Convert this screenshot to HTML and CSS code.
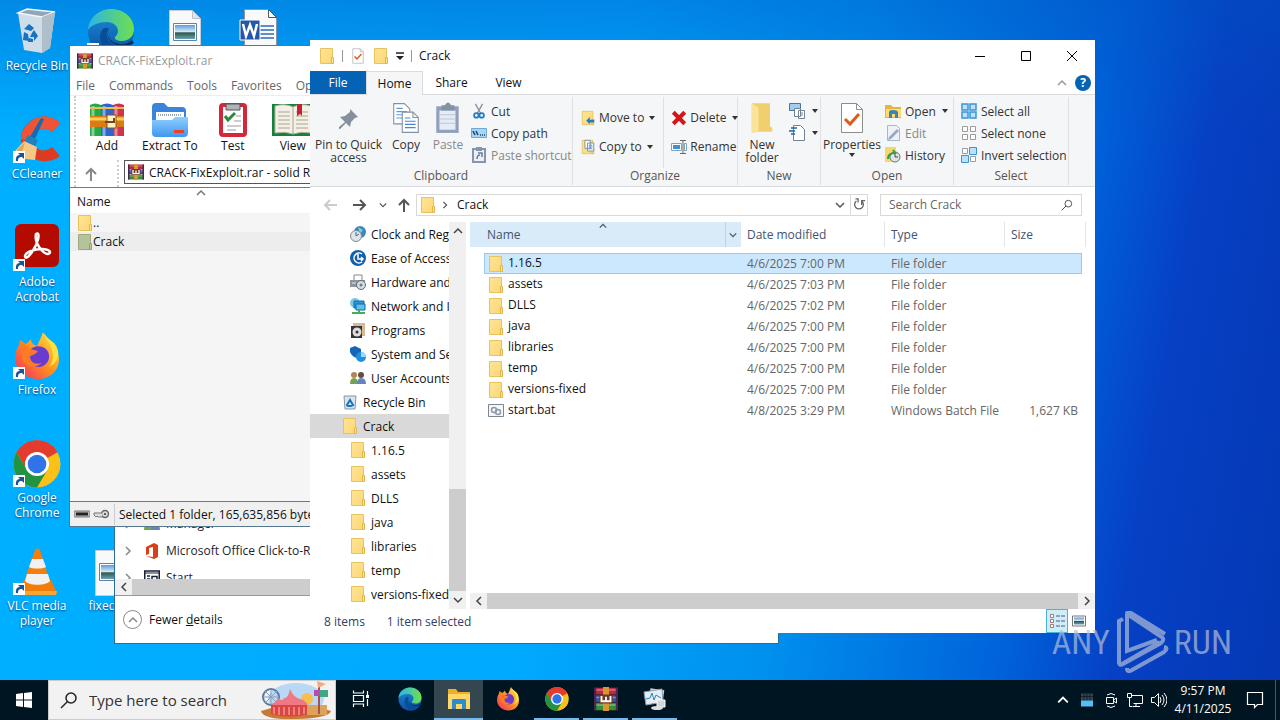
FILE: index.html
```html
<!DOCTYPE html>
<html lang="en">
<head>
    <meta charset="UTF-8">
    <meta name="viewport" content="width=device-width, initial-scale=1.0">
    <title>Crack</title>
    <link rel="stylesheet" href="styles.css">
</head>
<body>
    <!-- Icon sprite -->
    <svg class="sprite" aria-hidden="true">
        <defs>
            <linearGradient id="gFolder" x1="0" y1="0" x2="1" y2="1"><stop offset="0" stop-color="#ffe596"/><stop offset="1" stop-color="#fbd676"/></linearGradient>
            <linearGradient id="gEdge" x1="0" y1="0" x2="1" y2="0"><stop offset="0" stop-color="#2bb4e8"/><stop offset="1" stop-color="#6ee04c"/></linearGradient>
            <linearGradient id="gEdge2" x1="0" y1="0" x2="0" y2="1"><stop offset="0" stop-color="#1b8fd8"/><stop offset="1" stop-color="#0d4fa4"/></linearGradient>
            <linearGradient id="gFox" x1="1" y1="0" x2="0" y2="1"><stop offset="0" stop-color="#fff04a"/><stop offset=".5" stop-color="#ff9020"/><stop offset="1" stop-color="#f2266b"/></linearGradient>
            <linearGradient id="gZip" x1="0" y1="0" x2="0" y2="1"><stop offset="0" stop-color="#8fd0ff"/><stop offset="1" stop-color="#3f97ee"/></linearGradient>
            <linearGradient id="gSky" x1="0" y1="0" x2="0" y2="1"><stop offset="0" stop-color="#5a9bdc"/><stop offset=".5" stop-color="#dcebf4"/><stop offset=".55" stop-color="#2d5a4c"/><stop offset="1" stop-color="#6fa0b4"/></linearGradient>
        </defs>
        <symbol id="folder" viewBox="0 0 16 18"><path d="M1.500 1.500h12v15h-12z" fill="url(#gFolder)" stroke="#e8c35c"/><path d="M12.500 10.500h2v6h-2z" fill="#ffe596" stroke="#e0b64c"/></symbol>
        <symbol id="folder-green" viewBox="0 0 16 18"><path d="M1.500 1.500h12v15h-12z" fill="#b5c39a" stroke="#9caa7c"/><path d="M12.500 10.500h2v6h-2z" fill="#bccaa0" stroke="#93a276"/></symbol>
        <symbol id="shortcut" viewBox="0 0 48 48"><path d="M0 35h12v12H0z" fill="#fff"/><path d="M3 45c-.5-4 1-6 4-6l-2-2h6v6l-2-2c-3 0-4 1-4 4z" fill="#1d5496"/></symbol>
        <symbol id="recycle" viewBox="0 0 48 48"><path d="M5 5l9-4 28 3-5 36-8 5-18-3z" fill="#cfdde8"/><path d="M5 5l9-4 28 3-13 5z" fill="#93a6b5" stroke="#f2f7fa" stroke-width="1.500"/><path d="M29 9l13-5-5 36-8 5z" fill="#afbfca"/><path d="M11 21l5-5 5 4-3 3zM21 22l4 6-4 5v-4h-4l2-4zM11 24l4 2 1 7-6-1zM16 30l4 1v3h-5z" fill="#1572c4"/></symbol>
        <symbol id="edge" viewBox="0 0 48 48"><circle cx="24" cy="24" r="23" fill="url(#gEdge2)"/><path d="M1 22C2 8 14 1 24 1c13 0 23 9 23 20 0 8-6 12-12 12-5 0-8-2-7-4 2-2 3-4 3-6 0-5-5-9-11-9C12 14 4 17 1 22z" fill="url(#gEdge)"/><path d="M17 20c-7 6-5 20 9 27 9 0 16-5 19-12-9 6-23 3-25-6-1-4 0-7 2-9z" fill="#0a4c98"/><path d="M22 20c-4 7 1 16 13 16 5 0 8-2 10-4l2 3c-8 6-23 3-26-6-1-4-1-7 1-9z" fill="#07315f"/></symbol>
        <symbol id="picture-file" viewBox="0 0 48 48"><path d="M8.500 2.500h23l8 8v37h-31z" fill="#f8f9fa" stroke="#c8ced4"/><path d="M31.500 2.500v8h8z" fill="#dfe5ea" stroke="#b9c2ca"/><path d="M12.500 15.500h23v17h-23z" fill="#fff" stroke="#5c84a6"/><path d="M14 17h20v14H14z" fill="url(#gSky)"/></symbol>
        <symbol id="word-file" viewBox="0 0 48 48"><path d="M9.500 1.500h24l8 8v37h-32z" fill="#f8f9fa" stroke="#8b949c"/><path d="M33.500 1.500v8h8z" fill="#fff" stroke="#555"/><path d="M25 18h14M25 22h14M25 26h14M25 30h14" stroke="#2b6cb8" stroke-width="1.500"/><path d="M5 12h20v20H5z" fill="#2457a8" stroke="#fff"/><path d="M8 16l3 12 4-11 4 11 3-12" fill="none" stroke="#fff" stroke-width="2.500"/></symbol>
        <symbol id="ccleaner" viewBox="0 0 48 48"><path d="M47 7l-8 9c-8-8-20-1-18 10 2 9 11 11 18 5l8 9C34 51 9 44 8 24 8 3 33-7 47 7z" fill="#dd3a22"/><path d="M47 7l-8 9c-8-8-20-1-18 10L8 23C10 3 33-7 47 7z" fill="#ee5438"/><path d="M31 3l-9 20-5-2L28 2z" fill="#176aae"/><path d="M15 19l10 5-3 7-11-5z" fill="#2380bf"/><path d="M11 25l13 6-2 13-10-1-10-8z" fill="#f3c889"/><path d="M4 34l8-8-4 14z" fill="#dca65c"/></symbol>
        <symbol id="acrobat" viewBox="0 0 48 48"><rect x="2" y="0" width="44" height="43" rx="6" fill="#b30b00"/><path d="M23 10c5-3 2 10-4 18-4 6-7 7-7 4 1-4 9-7 17-7 8 0 10 4 6 5-5 0-14-11-12-20z" fill="none" stroke="#fff" stroke-width="2.500"/></symbol>
        <symbol id="firefox" viewBox="0 0 48 48"><path d="M30 0c2 5 5 6 8 9l1 3c4 4 7 9 7 15 0 12-9 20-21 20S2 38 2 26c0-6 2-10 4-13l1-5c3 2 4 3 6 4l5-5c0 4 3 6 6 7C26 9 28 6 30 0z" fill="url(#gFox)"/><path d="M15 21c3-7 12-9 18-4 6 6 3 17-7 18-8 0-12-7-11-14z" fill="#6a3bd0"/><path d="M7 11c4 1 8 4 10 6l8 2c-2 3-5 4-8 5 0 7 6 9 12 7-8 7-19 3-20-6z" fill="#ff7a24"/><path d="M31 1c1 7 9 11 9 22 0 6-2 10-5 12 10-3 14-15 6-24-4-3-8-6-10-10z" fill="#ffe13d"/></symbol>
        <symbol id="chrome" viewBox="0 0 48 48"><circle cx="24" cy="24" r="23.500" fill="#fbc116"/><path d="M24 24L3.600 12.300A23.500 23.500 0 0 1 44.400 12.300z" fill="#e33b2e"/><path d="M24 12h20.400A23.500 23.500 0 0 0 3.600 12.300L14 30z" fill="#e33b2e"/><path d="M3.600 12.300A23.500 23.500 0 0 0 24 47.500L34.400 30 14 30z" fill="#229342"/><circle cx="24" cy="24" r="12" fill="#fff"/><circle cx="24" cy="24" r="9.300" fill="#2f74e8"/></symbol>
        <symbol id="vlc" viewBox="0 0 48 48"><path d="M11 32h27l6 13H5z" fill="#f07c0a"/><path d="M5 43h39l-1 4H4z" fill="#ffa632"/><path d="M22 2c1-2 4-2 5 0l10 32c-3 6-23 6-26 0z" fill="#f57e0c"/><path d="M19 11h11l3 8c-3 2-14 2-17 0zM14 26h21l2 7c-4 5-21 5-25 0z" fill="#f0f1f0"/></symbol>
        <symbol id="rar" viewBox="0 0 32 32"><path d="M0 1h32v9H0z" fill="#bd2840"/><path d="M0 11h32v9H0z" fill="#3752af"/><path d="M0 21h32v10H0z" fill="#398e36"/><path d="M0 4h32M0 14h32M0 24h32" stroke="#ffffff55" stroke-width="2"/><path d="M0 1h3v30H0zM29 1h3v30h-3z" fill="#48264f"/><path d="M12 0h8v32h-8z" fill="#d59634"/><path d="M7 10h18v12H7z" fill="#713b20"/><path d="M10 12v7h12v-7M16 13v6" fill="none" stroke="#fff" stroke-width="2.500"/></symbol>
        <symbol id="books" viewBox="0 0 34 34"><path d="M0 2q5-3 11 0v31H0z" fill="#28a745"/><path d="M11 2q6-3 12 0v31H11z" fill="#2c65cb"/><path d="M23 2q6-3 11 0v31H23z" fill="#ce344e"/><path d="M3 3v30M14 3v30M26 3v30" stroke="#ffffff70" stroke-width="3"/><path d="M0 13h34v11H0z" fill="#d97b17"/><path d="M0 16h34" stroke="#ffcd55" stroke-width="3"/><rect x="17" y="12" width="9" height="13" fill="#fff1c3" stroke="#875325"/><path d="M15 19h9v-4" fill="none" stroke="#774516" stroke-width="2"/><path d="M0 5h34" stroke="#eac151" stroke-width="2"/></symbol>
        <symbol id="extract" viewBox="0 0 36 34"><path d="M0 4q0-4 4-4h8l4 4h14q4 0 4 4v22H0z" fill="#3b84de"/><path d="M4 9h28v12H4z" fill="#fff"/><path d="M6 12h24" stroke="#9aa9ba" stroke-width="2" stroke-dasharray="1 1"/><path d="M0 17h20l3-3h13v16q0 4-4 4H4q-4 0-4-4z" fill="url(#gZip)"/><path d="M22 27h10v3H22z" fill="#e9412b"/></symbol>
        <symbol id="test" viewBox="0 0 28 34"><rect width="28" height="34" rx="4" fill="#d5273c"/><path d="M4 4h20v26H4z" fill="#fff"/><path d="M7 1h14v6H7z" fill="#adb5bb" stroke="#555"/><path d="M6 13l3 4 7-7" fill="none" stroke="#2c8a3d" stroke-width="3"/><path d="M15 18h7M8 23h14M17 13h5M8 27h9" stroke="#999"/></symbol>
        <symbol id="book" viewBox="0 0 42 34"><path d="M0 1h42v32H0z" fill="#14823d"/><path d="M3 3q10-3 18 1 8-4 18-1v27q-10-2-18 1-8-3-18-1z" fill="#f4f0e5" stroke="#b8b0a0"/><path d="M21 4v27M6 9h12M6 13h12M6 17h12M6 21h12M6 25h12M24 9h12M24 13h12M24 17h12M24 21h12M24 25h12" stroke="#a7a393"/><path d="M25 1h5v12l-2-2-3 2z" fill="#c32134"/></symbol>
        <symbol id="up" viewBox="0 0 16 16"><path d="M8 15V3M3 8l5-5 5 5" fill="none" stroke="currentColor" stroke-width="2"/></symbol>
        <symbol id="back" viewBox="0 0 16 16"><path d="M15 8H3M8 3L3 8l5 5" fill="none" stroke="currentColor" stroke-width="2"/></symbol>
        <symbol id="forward" viewBox="0 0 16 16"><path d="M1 8h12M8 3l5 5-5 5" fill="none" stroke="currentColor" stroke-width="2"/></symbol>
        <symbol id="chev-up" viewBox="0 0 10 10"><path d="M1 7l4-4 4 4" fill="none" stroke="currentColor" stroke-width="1.500"/></symbol>
        <symbol id="chev-down" viewBox="0 0 10 10"><path d="M1 3l4 4 4-4" fill="none" stroke="currentColor" stroke-width="1.500"/></symbol>
        <symbol id="chev-left" viewBox="0 0 10 10"><path d="M7 1L3 5l4 4" fill="none" stroke="currentColor" stroke-width="1.500"/></symbol>
        <symbol id="chev-right" viewBox="0 0 10 10"><path d="M3 1l4 4-4 4" fill="none" stroke="currentColor" stroke-width="1.500"/></symbol>
        <symbol id="caret" viewBox="0 0 6 4"><path d="M0 0h6L3 4z" fill="currentColor"/></symbol>
        <symbol id="qat-menu" viewBox="0 0 8 8"><path d="M0 1h8" stroke="#222" stroke-width="1.500"/><path d="M0 4h8L4 8z" fill="#222"/></symbol>
        <symbol id="checkdoc" viewBox="0 0 24 32"><path d="M1.500 1.500h15l6 6v23h-21z" fill="#fff" stroke="#8d8d8d"/><path d="M16.500 1.500v6h6" fill="none" stroke="#8d8d8d"/><path d="M5 17l5 5 9-10" fill="none" stroke="#e3591b" stroke-width="3"/></symbol>
        <symbol id="pin" viewBox="0 0 24 24"><path d="M13 3l8 8-3 1-4 4-1 5-4-4-6 6-1 0v-2l6-5-5-5 5-1 5-4z" fill="#85909c"/></symbol>
        <symbol id="copy" viewBox="0 0 26 30"><path d="M1.500 1.500h10l5 5v14h-15z" fill="#fff" stroke="#8290a0"/><path d="M4 6h6M4 9h10M4 12h10M4 15h10" stroke="#5e9bdf"/><path d="M9.500 9.500h10l5 5v14h-15z" fill="#fff" stroke="#8290a0"/><path d="M19.500 9.500v5h5" fill="none" stroke="#8290a0"/><path d="M12 15h5M12 18h10M12 21h10M12 24h10" stroke="#3e87dc"/></symbol>
        <symbol id="paste" viewBox="0 0 24 30"><path d="M1 4h21v25H1z" fill="#8fa1bb"/><path d="M4 8h15v18H4z" fill="#e6ecf5"/><path d="M4 12h15M4 16h15M4 20h15" stroke="#bac6d8"/><path d="M6 3h3q3-5 6 0h3v5H6z" fill="#8393a6"/></symbol>
        <symbol id="cut" viewBox="0 0 16 18"><path d="M4 1l6 11M12 1L6 12" stroke="#8794a4" stroke-width="1.500"/><circle cx="5" cy="14" r="2.500" fill="none" stroke="#257ac0" stroke-width="2"/><circle cx="11" cy="14" r="2.500" fill="none" stroke="#257ac0" stroke-width="2"/></symbol>
        <symbol id="path" viewBox="0 0 16 10"><path d="M.5.5h15v9H.5z" fill="#a9d4f4" stroke="#70a9d5"/><path d="M2 3l2 4M5 3l2 4M9 7h1M11 7h1M13 7h1" stroke="#144471" stroke-width="1.500"/></symbol>
        <symbol id="paste-shortcut" viewBox="0 0 14 16"><path d="M1 2h12v13H1z" fill="#ecf0f6" stroke="#8794ad" stroke-width="2"/><path d="M4 0h6v4H4z" fill="#8794ad"/><path d="M5 12q0-4 3-4M6 6h4v4" fill="none" stroke="#687998" stroke-width="1.500"/></symbol>
        <symbol id="moveto" viewBox="0 0 16 18"><use href="#folder"/><path d="M6 12l4-4v3h5v3h-5v2z" fill="#287bc3"/></symbol>
        <symbol id="copyto" viewBox="0 0 16 18"><use href="#folder"/><path d="M4.500 1.500h6v9h-6zM7.500 4.500h7v9h-7z" fill="#fff" stroke="#728aa3"/><path d="M9 7h4M9 9h4M9 11h4" stroke="#468bd1"/></symbol>
        <symbol id="delete" viewBox="0 0 14 14"><path d="M2 2l10 10M12 2L2 12" stroke="#d4151a" stroke-width="3.500"/></symbol>
        <symbol id="rename" viewBox="0 0 16 16"><path d="M.5 4.500h10v7H.5zM13.500 4.500h2v7h-2z" fill="#fff" stroke="#7fa3c2"/><path d="M2 6h7v4H2z" fill="#4490d5"/><path d="M9 1.500h6M9 14.500h6M12 1.500v13" stroke="#666"/></symbol>
        <symbol id="newfolder" viewBox="0 0 20 28"><path d="M1 1h16v20l2 2v3H6l-5 1z" fill="#f2cf6d"/><path d="M1 1l6 4v20l-6 2z" fill="#fbe39a"/></symbol>
        <symbol id="newitem" viewBox="0 0 18 18"><path d="M1.500 1.500h11v7h-11z" fill="#a4cdec" stroke="#417897"/><path d="M6.500 6.500h6v8h-6zM10.500 8.500h6v8h-6z" fill="#fff" stroke="#718295"/><path d="M12 11h3M12 13h3" stroke="#718295"/></symbol>
        <symbol id="easy" viewBox="0 0 18 18"><path d="M5.500 1.500h7l4 4v11h-11z" fill="#fff" stroke="#6f8499"/><path d="M3 4h6M1 7h6M3 10h4" stroke="#2461ad" stroke-width="1.500"/></symbol>
        <symbol id="open" viewBox="0 0 16 16"><path d="M0 2h6l2 2h8v11H0z" fill="#e7b637"/><path d="M1 6h15v8H1z" fill="#ffdb70"/><path d="M4 15V9q0-2 4-2t5 2v6h-3v-4H7v4z" fill="#3984be"/></symbol>
        <symbol id="edit" viewBox="0 0 16 16"><path d="M2.500.5h9l3 3v12h-12z" fill="#eef2f8" stroke="#aab5c6"/><path d="M4 12l8-8 2 2-8 8-3 1z" fill="#96a9c4"/></symbol>
        <symbol id="history" viewBox="0 0 16 16"><path d="M0 0h11v15H0z" fill="#f8d66e"/><circle cx="10" cy="10" r="5" fill="#dfe4e4" stroke="#6b7573"/><path d="M10 7v3h3" fill="none" stroke="#444"/><path d="M3 12q0-6 7-6L8 3" fill="none" stroke="#30a042" stroke-width="2"/></symbol>
        <symbol id="selall" viewBox="0 0 16 16"><path d="M1 1h6v6H1zM9 1h6v6H9zM1 9h6v6H1zM9 9h6v6H9z" fill="#bfe0fa" stroke="#3a95d7" stroke-width="1.500"/></symbol>
        <symbol id="selnone" viewBox="0 0 16 16"><path d="M1.500 1.500h5v5h-5zM9.500 1.500h5v5h-5zM1.500 9.500h5v5h-5zM9.500 9.500h5v5h-5z" fill="#fff" stroke="#9b9b9b"/></symbol>
        <symbol id="selinv" viewBox="0 0 16 16"><path d="M1.500 1.500h5v5h-5zM9.500 9.500h5v5h-5z" fill="#fff" stroke="#9b9b9b"/><path d="M8.500.5h7v7h-7zM.5 8.500h7v7h-7z" fill="#bfe0fa" stroke="#3a95d7"/></symbol>
        <symbol id="refresh" viewBox="0 0 16 16"><path d="M5 3.500A5 5 0 1 0 11 3.500M11 8V3h4M4 1h3v4" fill="none" stroke="#666" stroke-width="1.500"/></symbol>
        <symbol id="loupe" viewBox="0 0 18 18"><circle cx="11" cy="7" r="5" fill="none" stroke="currentColor" stroke-width="1.500"/><path d="M7.500 10.500L1 17" stroke="currentColor" stroke-width="1.500"/></symbol>
        <symbol id="clock" viewBox="0 0 16 16"><circle cx="10" cy="6" r="6" fill="#3888bd"/><path d="M8 1l5 3-3 4z" fill="#8ac6e3"/><circle cx="6" cy="10" r="5.500" fill="#dce5e9" stroke="#7d8b95"/><path d="M6 6v4l3-2" fill="none" stroke="#556879"/></symbol>
        <symbol id="ease" viewBox="0 0 16 16"><circle cx="8" cy="8" r="8" fill="#1260ac"/><path d="M12 4a5 5 0 1 0 0 8M8 4v5h5M11 7l2 2-2 2" fill="none" stroke="#fff" stroke-width="1.500"/></symbol>
        <symbol id="hardware" viewBox="0 0 16 16"><path d="M4 1h8v6H4z" fill="#fff" stroke="#888"/><path d="M0 6h15v7H0z" fill="#8b969e"/><circle cx="11" cy="11" r="4.500" fill="#d5dde1" stroke="#5f6a72"/><circle cx="11" cy="11" r="1.500" fill="#667d8b"/><path d="M2 9h4" stroke="#dfe7ea"/></symbol>
        <symbol id="network" viewBox="0 0 16 16"><circle cx="5" cy="5" r="5" fill="#7fc6e6"/><path d="M4 3h10v7H4z" fill="#2a99dc" stroke="#136aa3"/><path d="M6 6h9v6H6z" fill="#5dc1f0" stroke="#136aa3"/><path d="M2 15h13M9 12v3" stroke="#4caa58" stroke-width="2"/></symbol>
        <symbol id="programs" viewBox="0 0 16 16"><path d="M3 1h12v13H3z" fill="#d7ba94"/><path d="M1 4h11v12H1z" fill="#343434"/><circle cx="7" cy="10" r="4.500" fill="#ddd"/><circle cx="7" cy="10" r="1.500" fill="#343434"/></symbol>
        <symbol id="system" viewBox="0 0 16 16"><path d="M0 2l5-2 6 3v4q0 4-4 5-5-1-7-6z" fill="#1566b8"/><circle cx="11" cy="11" r="5" fill="#1e90de"/><path d="M11 11V6a5 5 0 0 1 5 5z" fill="#98dbff"/></symbol>
        <symbol id="users" viewBox="0 0 16 16"><circle cx="4" cy="5" r="3" fill="#b48453"/><circle cx="11" cy="5" r="3" fill="#654c3c"/><path d="M0 14q0-6 4-6t4 6z" fill="#72a354"/><path d="M7 14q0-6 4-6 5 0 5 6z" fill="#6484bb"/></symbol>
        <symbol id="bin" viewBox="0 0 16 16"><path d="M2 2h12l-1 13H3z" fill="#d8e5ec" stroke="#8397a5"/><path d="M5 11l3-5 3 5-2 1H6z" fill="none" stroke="#1776c2" stroke-width="2"/></symbol>
        <symbol id="bat" viewBox="0 0 16 14"><path d="M.5.500h15v12H.5z" fill="#f5f7f9" stroke="#7b8790"/><circle cx="6" cy="6" r="2.500" fill="none" stroke="#8c9aa7" stroke-width="1.500"/><circle cx="10" cy="8" r="2.500" fill="none" stroke="#8c9aa7" stroke-width="1.500"/></symbol>
        <symbol id="drive" viewBox="0 0 16 8"><rect y="1" width="16" height="6" rx="1" fill="#bbb" stroke="#777"/><path d="M2 4h12" stroke="#222" stroke-width="3"/></symbol>
        <symbol id="key" viewBox="0 0 16 10"><circle cx="12" cy="5" r="3.500" fill="#ddd" stroke="#666" stroke-width="1.500"/><path d="M9 4H1v2l2 2 1-1 1 1h4" fill="#ddd" stroke="#777"/><circle cx="12" cy="5" r="1" fill="#333"/></symbol>
        <symbol id="office" viewBox="0 0 14 16"><path d="M1 4l8-4 4 2v12l-4 2-8-3 7 1V4L4 5v6l-3 1z" fill="#dc3e15"/></symbol>
        <symbol id="startapp" viewBox="0 0 16 16"><path d="M.75 1h14.500v14H.75z" fill="#fff" stroke="#142038" stroke-width="1.500"/><path d="M1 3h14" stroke="#142038"/><path d="M3 6h3M3 9h3M8 6.500h5v4H8z" fill="none" stroke="#142038" stroke-width="1.500"/></symbol>
        <symbol id="details" viewBox="0 0 16 14"><path d="M1.500.5h3v3h-3zM1.500 5.500h3v3h-3zM1.500 10.500h3v3h-3z" fill="#fff" stroke="#a77"/><path d="M7 2h4M12 2h4M7 7h4M12 7h4M7 12h4M12 12h4" stroke="#557"/></symbol>
        <symbol id="thumbs" viewBox="0 0 14 11"><path d="M.5.5h13v10H.5z" fill="#fff" stroke="#777"/><path d="M2 2h10v7H2z" fill="url(#gSky)"/></symbol>
        <symbol id="windows" viewBox="0 0 16 16"><path d="M0 2l7-1v6.500H0zM8 1l8-1v7.500H8zM0 8.500h7V15l-7-1zM8 8.500h8V16l-8-1z" fill="#fff"/></symbol>
        <symbol id="carnival" viewBox="0 0 70 38"><ellipse cx="35" cy="18" rx="28" ry="16" fill="#b9d8f5"/><circle cx="10" cy="16" r="8" fill="none" stroke="#577ba0" stroke-width="2"/><path d="M10 8v16M2 16h16M4 10l12 12M16 10L4 22" stroke="#8b9db5"/><path d="M0 30q35-12 70 0-2 7-35 8T0 30z" fill="#c77a36"/><circle cx="46" cy="18" r="6" fill="#f8bd4b"/><path d="M9 24q5-1 8-7 5 4 6 0 4 1 6-9 3 8 10 10 5 1 8 6z" fill="#ee7884"/><path d="M10 24h38v9q-19 5-38 0z" fill="#dc4345"/><path d="M13 26v7M18 26v8M23 26v8M28 26v8M33 26v8M38 26v8M43 26v7" stroke="#ffc4a8"/><path d="M46 24h20v10H46z" fill="#dca35b"/><path d="M58 2v31" stroke="#a85345" stroke-width="2"/><path d="M56 0l9 3-8 4z" fill="#f2aa80"/><path d="M53 9h6v6h-6z" fill="#b84caf"/><path d="M59 9h8v7h-8z" fill="#40a683"/></symbol>
        <symbol id="taskview" viewBox="0 0 18 18"><path d="M1.500 2V.5M11.500.5V3h-10V.5M1.500 5.500h10v6h-10zM1.500 17v-3h10v3M15.500 1v4M15.500 9v7" fill="none" stroke="#fff" stroke-width="1.200"/><path d="M14 5h3v3h-3z" fill="#fff"/></symbol>
        <symbol id="explorer" viewBox="0 0 24 22"><path d="M1 1h8l2 3h12v16H1z" fill="#f0ad26"/><path d="M1 6h22v15H1z" fill="#ffd766"/><path d="M5 21v-9q0-1 2-1h10q2 0 2 1v9h-4v-5H9v5z" fill="#2d8ccb"/></symbol>
        <symbol id="monitor" viewBox="0 0 24 24"><path d="M6 2h14v10H6z" fill="#ccd4d9" transform="rotate(8 12 12)"/><path d="M1 5l18-3 1 13-17 3z" fill="#e5edf2" stroke="#8d9ba4"/><path d="M3 12l4-1 2-5 2 7 2-5 5 3" fill="none" stroke="#2a86bd"/><path d="M14 13h8v7h-8z" fill="#ced7dc" stroke="#f8fbfd"/><ellipse cx="14" cy="21" rx="6" ry="2" fill="#d8dfe3"/></symbol>
        <symbol id="guard" viewBox="0 0 12 13"><path d="M0 0h12v7H0z" fill="#334653"/><path d="M0 3h12M3 0v7M6 0v7M9 0v7" stroke="#142028"/><path d="M0 7h12v6H0z" fill="#56c0f2"/></symbol>
        <symbol id="meet" viewBox="0 0 14 16"><path d="M2.500 5.500h7v6h-7zM9.500 8l3-2v5l-3-2M3 3q4-3 8 0M3 14q4 3 8 0" fill="none" stroke="#fff"/></symbol>
        <symbol id="net" viewBox="0 0 16 16"><path d="M4.500 3.500h11v8h-9M9 12v2.500M6 14.500h7M.5 1.500h4v4h-4zM2.500 5.500v9h3" fill="none" stroke="#fff"/></symbol>
        <symbol id="sound" viewBox="0 0 16 16"><path d="M.5 5.500h3l4-4v13l-4-4h-3zM9 5q2 3 0 6M11 3q4 5 0 10M13 1q6 7 0 14" fill="none" stroke="#fff"/></symbol>
        <symbol id="notes" viewBox="0 0 18 18"><path d="M1.500 1.500h15v12h-5l-3 3v-3h-7z" fill="none" stroke="#fff" stroke-width="1.200"/></symbol>
        <symbol id="play" viewBox="0 0 54 62"><path d="M8 8L4 10v42q1 3 4 1l38-21q5-4-1-7L12 3q0-3 4-1l34 21M12 3v37l30-11M7 53l38-22M12 57q0 5 5 2l32-18q5-4 0-5" fill="none" stroke="currentColor" stroke-width="4"/></symbol>
    </svg>

    <main class="desktop">
        <!-- Desktop shortcuts -->
        <div class="shortcuts">
            <a class="shortcut c1 r1" href="#"><svg><use href="#recycle"/></svg><span>Recycle Bin</span></a>
            <a class="shortcut c1 r2" href="#"><svg><use href="#ccleaner"/><use href="#shortcut"/></svg><span>CCleaner</span></a>
            <a class="shortcut c1 r3" href="#"><svg><use href="#acrobat"/><use href="#shortcut"/></svg><span>Adobe Acrobat</span></a>
            <a class="shortcut c1 r4" href="#"><svg><use href="#firefox"/><use href="#shortcut"/></svg><span>Firefox</span></a>
            <a class="shortcut c1 r5" href="#"><svg><use href="#chrome"/><use href="#shortcut"/></svg><span>Google Chrome</span></a>
            <a class="shortcut c1 r6" href="#"><svg><use href="#vlc"/><use href="#shortcut"/></svg><span>VLC media player</span></a>
            <a class="shortcut c2 r1" href="#" aria-label="Edge"><svg><use href="#edge"/><use href="#shortcut"/></svg></a>
            <a class="shortcut c3 r1" href="#" aria-label="Picture"><svg><use href="#picture-file"/></svg></a>
            <a class="shortcut c4 r1" href="#" aria-label="Document"><svg><use href="#word-file"/></svg></a>
            <a class="shortcut c2 r6" href="#"><svg><use href="#picture-file"/></svg><span>fixedfull</span></a>
        </div>

        <!-- Task manager window -->
        <section class="window taskman">
            <div class="tm-list">
                <div class="tm-row"><svg class="i10"><use href="#chev-right"/></svg><svg class="i16"><use href="#users"/></svg>Manager</div>
                <div class="tm-row"><svg class="i10"><use href="#chev-right"/></svg><svg class="i16"><use href="#office"/></svg>Microsoft Office Click-to-Run (SxS)</div>
                <div class="tm-row"><svg class="i10"><use href="#chev-right"/></svg><svg class="i16"><use href="#startapp"/></svg>Start</div>
            </div>
            <div class="hscroll"><button aria-label="Scroll left"><svg class="i10"><use href="#chev-left"/></svg></button><div class="thumb"></div></div>
            <div class="tm-foot">
                <button class="fewer"><span class="ring"><svg class="i10"><use href="#chev-up"/></svg></span><span>Fewer <u>d</u>etails</span></button>
            </div>
        </section>

        <!-- Archive window -->
        <section class="window winrar">
            <header class="wr-title"><svg class="i16"><use href="#rar"/></svg>CRACK-FixExploit.rar</header>
            <nav class="wr-menu"><button>File</button><button>Commands</button><button>Tools</button><button>Favorites</button><button>Options</button></nav>
            <div class="wr-tools">
                <button><svg class="w34"><use href="#books"/></svg>Add</button>
                <button><svg class="w36"><use href="#extract"/></svg>Extract To</button>
                <button><svg class="w28"><use href="#test"/></svg>Test</button>
                <button><svg class="w42"><use href="#book"/></svg>View</button>
            </div>
            <div class="wr-addr">
                <button aria-label="Up"><svg class="i16"><use href="#up"/></svg></button>
                <div class="wr-path"><svg class="i16"><use href="#rar"/></svg>CRACK-FixExploit.rar - solid RAR archive</div>
            </div>
            <div class="wr-list">
                <div class="wr-head">Name<svg class="i10"><use href="#chev-up"/></svg></div>
                <div class="wr-row"><svg class="file"><use href="#folder"/></svg>..</div>
                <div class="wr-row current"><svg class="file"><use href="#folder-green"/></svg>Crack</div>
            </div>
            <footer class="wr-status"><svg class="i16"><use href="#drive"/></svg><svg class="i16"><use href="#key"/></svg><span>Selected 1 folder, 165,635,856 bytes</span></footer>
        </section>

        <!-- Explorer window -->
        <section class="window explorer">
            <header class="title">
                <svg class="file"><use href="#folder"/></svg><i class="bar"></i>
                <button aria-label="Properties"><svg class="i16"><use href="#checkdoc"/></svg></button>
                <button aria-label="New folder"><svg class="file"><use href="#folder"/></svg></button>
                <button aria-label="Customize"><svg class="i8"><use href="#qat-menu"/></svg></button>
                <i class="bar"></i><h1>Crack</h1>
                <div class="controls">
                    <button aria-label="Minimize"><svg class="i10" viewBox="0 0 10 10"><path d="M0 5.500h10" stroke="#000"/></svg></button>
                    <button aria-label="Maximize"><svg class="i10" viewBox="0 0 10 10"><path d="M.5.5h9v9h-9z" fill="none" stroke="#000"/></svg></button>
                    <button aria-label="Close"><svg class="i10" viewBox="0 0 10 10"><path d="M0 0l10 10M10 0L0 10" stroke="#000"/></svg></button>
                </div>
            </header>
            <nav class="tabs">
                <button class="file-tab">File</button><button class="active">Home</button><button>Share</button><button>View</button>
                <div class="help"><svg class="i10"><use href="#chev-up"/></svg><button aria-label="Help">?</button></div>
            </nav>
            <div class="ribbon">
                <div class="group clipboard">
                    <div class="tools">
                        <button class="big pin"><svg><use href="#pin"/></svg>Pin to Quick access</button>
                        <button class="big"><svg><use href="#copy"/></svg>Copy</button>
                        <button class="big" disabled><svg><use href="#paste"/></svg>Paste</button>
                        <div class="stack">
                            <button><svg class="i16"><use href="#cut"/></svg>Cut</button>
                            <button><svg class="i16"><use href="#path"/></svg>Copy path</button>
                            <button disabled><svg class="i16"><use href="#paste-shortcut"/></svg>Paste shortcut</button>
                        </div>
                    </div>
                    <div class="caption">Clipboard</div>
                </div>
                <div class="group organize">
                    <div class="tools">
                        <div class="stack two">
                            <button><svg class="i16"><use href="#moveto"/></svg>Move to<svg class="caret"><use href="#caret"/></svg></button>
                            <button><svg class="i16"><use href="#copyto"/></svg>Copy to<svg class="caret"><use href="#caret"/></svg></button>
                        </div>
                        <div class="stack two divided">
                            <button><svg class="i16"><use href="#delete"/></svg>Delete<svg class="caret"><use href="#caret"/></svg></button>
                            <button><svg class="i16"><use href="#rename"/></svg>Rename</button>
                        </div>
                    </div>
                    <div class="caption">Organize</div>
                </div>
                <div class="group new">
                    <div class="tools">
                        <button class="big"><svg><use href="#newfolder"/></svg>New folder</button>
                        <div class="stack">
                            <button aria-label="New item"><svg class="i18"><use href="#newitem"/></svg><svg class="caret"><use href="#caret"/></svg></button>
                            <button aria-label="Easy access"><svg class="i18"><use href="#easy"/></svg><svg class="caret"><use href="#caret"/></svg></button>
                        </div>
                    </div>
                    <div class="caption">New</div>
                </div>
                <div class="group opening">
                    <div class="tools">
                        <button class="big"><svg><use href="#checkdoc"/></svg>Properties<svg class="caret"><use href="#caret"/></svg></button>
                        <div class="stack">
                            <button><svg class="i16"><use href="#open"/></svg>Open<svg class="caret"><use href="#caret"/></svg></button>
                            <button disabled><svg class="i16"><use href="#edit"/></svg>Edit</button>
                            <button><svg class="i16"><use href="#history"/></svg>History</button>
                        </div>
                    </div>
                    <div class="caption">Open</div>
                </div>
                <div class="group select">
                    <div class="tools">
                        <div class="stack">
                            <button><svg class="i16"><use href="#selall"/></svg>Select all</button>
                            <button><svg class="i16"><use href="#selnone"/></svg>Select none</button>
                            <button><svg class="i16"><use href="#selinv"/></svg>Invert selection</button>
                        </div>
                    </div>
                    <div class="caption">Select</div>
                </div>
            </div>
            <div class="address">
                <button class="off" aria-label="Back"><svg class="i16"><use href="#back"/></svg></button>
                <button aria-label="Forward"><svg class="i16"><use href="#forward"/></svg></button>
                <button class="recent" aria-label="Recent"><svg class="i8"><use href="#chev-down"/></svg></button>
                <button class="up" aria-label="Up"><svg class="i16"><use href="#up"/></svg></button>
                <div class="crumbs">
                    <svg class="file"><use href="#folder"/></svg><svg class="i8"><use href="#chev-right"/></svg><span>Crack</span>
                    <button aria-label="Previous locations"><svg class="i10"><use href="#chev-down"/></svg></button>
                    <button class="refresh" aria-label="Refresh"><svg class="i14"><use href="#refresh"/></svg></button>
                </div>
                <div class="find"><input type="text" placeholder="Search Crack" aria-label="Search Crack"><svg class="i12"><use href="#loupe"/></svg></div>
            </div>
            <div class="body">
                <div class="tree">
                    <a href="#"><svg class="i16"><use href="#clock"/></svg>Clock and Region</a>
                    <a href="#"><svg class="i16"><use href="#ease"/></svg>Ease of Access</a>
                    <a href="#"><svg class="i16"><use href="#hardware"/></svg>Hardware and Sound</a>
                    <a href="#"><svg class="i16"><use href="#network"/></svg>Network and Internet</a>
                    <a href="#"><svg class="i16"><use href="#programs"/></svg>Programs</a>
                    <a href="#"><svg class="i16"><use href="#system"/></svg>System and Security</a>
                    <a href="#"><svg class="i16"><use href="#users"/></svg>User Accounts</a>
                    <a href="#" class="top"><svg class="i16"><use href="#bin"/></svg>Recycle Bin</a>
                    <a href="#" class="top here"><svg class="file"><use href="#folder"/></svg>Crack</a>
                    <a href="#"><svg class="file"><use href="#folder"/></svg>1.16.5</a>
                    <a href="#"><svg class="file"><use href="#folder"/></svg>assets</a>
                    <a href="#"><svg class="file"><use href="#folder"/></svg>DLLS</a>
                    <a href="#"><svg class="file"><use href="#folder"/></svg>java</a>
                    <a href="#"><svg class="file"><use href="#folder"/></svg>libraries</a>
                    <a href="#"><svg class="file"><use href="#folder"/></svg>temp</a>
                    <a href="#"><svg class="file"><use href="#folder"/></svg>versions-fixed</a>
                </div>
                <div class="vscroll">
                    <button aria-label="Scroll up"><svg class="i10"><use href="#chev-up"/></svg></button>
                    <div class="thumb"></div>
                    <button aria-label="Scroll down"><svg class="i10"><use href="#chev-down"/></svg></button>
                </div>
                <div class="files">
                    <table>
                        <colgroup><col class="gutter"><col><col class="date"><col class="type"><col class="size"><col class="edge"></colgroup>
                        <thead>
                            <tr>
                                <th colspan="2" class="sorted"><div>Name<svg class="i8 mark"><use href="#chev-up"/></svg><button aria-label="Filter"><svg class="i8"><use href="#chev-down"/></svg></button></div></th>
                                <th>Date modified</th><th>Type</th><th colspan="2">Size</th>
                            </tr>
                        </thead>
                        <tbody>
                            <tr class="selected"><td></td><td><svg class="file"><use href="#folder"/></svg>1.16.5</td><td>4/6/2025 7:00 PM</td><td>File folder</td><td></td><td></td></tr>
                            <tr><td></td><td><svg class="file"><use href="#folder"/></svg>assets</td><td>4/6/2025 7:03 PM</td><td>File folder</td><td></td><td></td></tr>
                            <tr><td></td><td><svg class="file"><use href="#folder"/></svg>DLLS</td><td>4/6/2025 7:02 PM</td><td>File folder</td><td></td><td></td></tr>
                            <tr><td></td><td><svg class="file"><use href="#folder"/></svg>java</td><td>4/6/2025 7:00 PM</td><td>File folder</td><td></td><td></td></tr>
                            <tr><td></td><td><svg class="file"><use href="#folder"/></svg>libraries</td><td>4/6/2025 7:00 PM</td><td>File folder</td><td></td><td></td></tr>
                            <tr><td></td><td><svg class="file"><use href="#folder"/></svg>temp</td><td>4/6/2025 7:00 PM</td><td>File folder</td><td></td><td></td></tr>
                            <tr><td></td><td><svg class="file"><use href="#folder"/></svg>versions-fixed</td><td>4/6/2025 7:00 PM</td><td>File folder</td><td></td><td></td></tr>
                            <tr><td></td><td><svg class="file"><use href="#bat"/></svg>start.bat</td><td>4/8/2025 3:29 PM</td><td>Windows Batch File</td><td>1,627 KB</td><td></td></tr>
                        </tbody>
                    </table>
                    <div class="hscroll">
                        <button aria-label="Scroll left"><svg class="i10"><use href="#chev-left"/></svg></button>
                        <div class="thumb"></div>
                        <button aria-label="Scroll right"><svg class="i10"><use href="#chev-right"/></svg></button>
                    </div>
                </div>
            </div>
            <footer class="status">
                <span>8 items</span><span>1 item selected</span>
                <div class="views">
                    <button class="on" aria-label="Details"><svg class="i16"><use href="#details"/></svg></button>
                    <button aria-label="Large icons"><svg class="i14"><use href="#thumbs"/></svg></button>
                </div>
            </footer>
        </section>

        <!-- Watermark -->
        <div class="watermark"><span>ANY</span><svg><use href="#play"/></svg><span>RUN</span></div>
    </main>

    <!-- Taskbar -->
    <footer class="taskbar">
        <button class="start" aria-label="Start"><svg class="i16"><use href="#windows"/></svg></button>
        <div class="search"><svg class="i18"><use href="#loupe"/></svg><input type="text" placeholder="Type here to search" aria-label="Type here to search"><svg class="carnival"><use href="#carnival"/></svg></div>
        <button class="app" aria-label="Task View"><svg class="i18"><use href="#taskview"/></svg></button>
        <button class="app" aria-label="Edge"><svg><use href="#edge"/></svg></button>
        <button class="app running focused" aria-label="File Explorer"><svg><use href="#explorer"/></svg></button>
        <button class="app" aria-label="Firefox"><svg><use href="#firefox"/></svg></button>
        <button class="app running" aria-label="Chrome"><svg><use href="#chrome"/></svg></button>
        <button class="app running" aria-label="WinRAR"><svg><use href="#rar"/></svg></button>
        <button class="app running" aria-label="Monitor"><svg><use href="#monitor"/></svg></button>
        <div class="tray">
            <button aria-label="Hidden icons"><svg class="i12"><use href="#chev-up"/></svg></button>
            <button aria-label="Guard"><svg class="i12"><use href="#guard"/></svg></button>
            <button aria-label="Camera"><svg class="i16"><use href="#meet"/></svg></button>
            <button aria-label="Network"><svg class="i16"><use href="#net"/></svg></button>
            <button aria-label="Volume"><svg class="i16"><use href="#sound"/></svg></button>
            <div class="time"><span>9:57 PM</span><span>4/11/2025</span></div>
            <button class="notes" aria-label="Notifications"><svg class="i18"><use href="#notes"/></svg></button>
            <button class="peek" aria-label="Show desktop"></button>
        </div>
    </footer>
</body>
</html>
```
FILE: styles.css
```css
* {
    box-sizing: border-box;
}

body {
    margin: 0;
    height: 100vh;
    display: flex;
    flex-direction: column;
    overflow: hidden;
    font-family: "Open Sans", "Noto Sans", sans-serif;
    font-size: 12px;
    line-height: 15px;
    color: #111;
}

button {
    font: inherit;
    color: inherit;
    background: none;
    border: 0;
    padding: 0;
    display: flex;
    align-items: center;
    justify-content: center;
    white-space: nowrap;
}

input {
    font: inherit;
    border: 0;
    padding: 0;
    background: none;
    min-width: 0;
    flex: 1;
}

input::placeholder {
    color: #666;
    opacity: 1;
}

a {
    color: inherit;
    text-decoration: none;
}

svg {
    flex: none;
    display: block;
}

/* Icon sizes */
.sprite { position: absolute; width: 0; height: 0; }
.i8 { width: 8px; height: 8px; }
.i10 { width: 10px; height: 10px; }
.i12 { width: 12px; height: 14px; }
.i14 { width: 14px; height: 14px; }
.i16 { width: 16px; height: 16px; }
.i18 { width: 18px; height: 18px; }
.file { width: 16px; height: 18px; }
.caret { width: 6px; height: 4px; }
.w28 { width: 28px; height: 34px; }
.w34 { width: 34px; height: 34px; }
.w36 { width: 36px; height: 34px; }
.w42 { width: 42px; height: 34px; }

/* Desktop */
.desktop {
    flex: 1;
    position: relative;
    overflow: hidden;
    background:
        linear-gradient(180deg, #0050c066 0, transparent 20%),
        linear-gradient(100deg, #00b0ff 0, #00aaff 45%, #0090ee 63%, #0062da 80%, #0640c4 88%, #0438b4 100%);
}

.shortcuts {
    display: grid;
    grid-template-columns: repeat(4, 74px);
    grid-template-rows: repeat(6, 108px);
}

.shortcut {
    display: flex;
    flex-direction: column;
    align-items: center;
    gap: 2px;
    padding-top: 8px;
    color: #fff;
    text-align: center;
    text-shadow: 0 1px 2px #003a70;
}

.shortcut svg {
    width: 48px;
    height: 48px;
}

.c1 { grid-column: 1; }
.c2 { grid-column: 2; }
.c3 { grid-column: 3; }
.c4 { grid-column: 4; }
.r1 { grid-row: 1; }
.r2 { grid-row: 2; }
.r3 { grid-row: 3; }
.r4 { grid-row: 4; }
.r5 { grid-row: 5; }
.r6 { grid-row: 6; }

.window {
    position: absolute;
    display: flex;
    flex-direction: column;
    background: #fff;
}

/* Task manager */
.taskman {
    inset: 300px 501px 36px 114px;
    border: 1px solid #2a6c9c;
}

.tm-list {
    flex: 1;
    display: flex;
    flex-direction: column;
    justify-content: flex-end;
    margin-bottom: -12px;
}

.tm-row {
    display: flex;
    align-items: center;
    gap: 6px;
    height: 27px;
    padding-left: 8px;
    color: #1c2430;
}

.tm-row .i16 { margin-left: 5px; }
.tm-row .i10 { color: #888; }

.hscroll {
    display: flex;
    height: 16px;
    position: relative;
    background: #f0f0f0;
    color: #444;
}

.hscroll button { width: 17px; }

.hscroll .thumb {
    flex: 1;
    background: #cdcdcd;
}

.tm-foot {
    height: 48px;
    padding-left: 8px;
    border-top: 1px solid #999;
    display: flex;
}

.fewer { gap: 7px; }

.ring {
    display: flex;
    align-items: center;
    justify-content: center;
    width: 19px;
    height: 19px;
    border: 1px solid #888;
    border-radius: 50%;
    color: #888;
}

/* WinRAR */
.winrar {
    inset: 45px 600px 153px 69px;
    border: 1px solid #55788f;
    border-width: 1px 0 1px 1px;
}

.wr-title {
    display: flex;
    align-items: center;
    gap: 5px;
    height: 29px;
    padding-left: 7px;
    color: #999;
}

.wr-menu {
    display: flex;
    gap: 14px;
    height: 21px;
    padding-left: 6px;
    color: #666;
    border-bottom: 1px solid #eee;
}

.wr-tools {
    display: flex;
    gap: 10px;
    height: 64px;
    margin-left: 4px;
    padding: 7px 0 0 6px;
    border-left: 2px dotted #ccc;
}

.wr-tools button {
    flex-direction: column;
    justify-content: flex-start;
    gap: 1px;
    min-width: 50px;
}

.wr-addr {
    display: flex;
    height: 27px;
    margin-left: 4px;
    border-left: 2px dotted #ccc;
    color: #888;
}

.wr-addr button {
    width: 43px;
    padding-right: 12px;
    border-right: 2px dotted #ccc;
    margin-right: 5px;
}

.wr-path {
    flex: 1;
    display: flex;
    align-items: center;
    gap: 5px;
    height: 24px;
    padding-left: 3px;
    border: 1px solid #555;
    color: #111;
}

.wr-list {
    flex: 1;
    border-top: 1px solid #777;
    background: #f5f5f5;
}

.wr-head {
    display: flex;
    gap: 85px;
    height: 25px;
    padding: 6px 0 0 7px;
    background: #fff;
}

.wr-head svg { margin-top: -6px; color: #777; }

.wr-row {
    display: flex;
    align-items: center;
    height: 19px;
    padding-left: 7px;
}

.wr-row.current { background: #ededed; }

.wr-status {
    display: flex;
    align-items: center;
    gap: 3px;
    height: 25px;
    padding-left: 4px;
    border-top: 1px solid #777;
    background: #f0f0f0;
}

.wr-status span {
    margin-left: 2px;
    padding: 3px 4px;
    border-left: 1px solid #ccc;
}

/* Explorer */
.explorer {
    inset: 40px 185px 47px 310px;
}

.title {
    display: flex;
    align-items: center;
    gap: 7px;
    height: 31px;
    padding-left: 9px;
}

.title h1 {
    margin: 0;
    font-size: 12px;
    font-weight: 400;
}

.bar {
    width: 1px;
    height: 12px;
    background: #999;
}

.controls {
    display: flex;
    margin-left: auto;
    align-self: stretch;
}

.controls button { width: 46px; }

.tabs {
    display: flex;
    height: 24px;
    border-bottom: 1px solid #dadbdc;
}

.tabs > button { width: 57px; }

.tabs .file-tab {
    width: 56px;
    background: #0563b5;
    color: #fff;
}

.tabs .active {
    height: 24px;
    border: 1px solid #dadbdc;
    border-bottom: 0;
    background: #f5f6f7;
}

.help {
    display: flex;
    align-items: center;
    gap: 8px;
    margin-left: auto;
    padding-right: 4px;
    color: #999;
}

.help button {
    width: 16px;
    height: 16px;
    border-radius: 50%;
    background: #0563b5;
    color: #fff;
    font-weight: 700;
}

.ribbon {
    display: flex;
    height: 92px;
    padding: 2px 0 1px;
    background: #f5f6f7;
    border-bottom: 1px solid #dadbdc;
    color: #333;
}

.group {
    display: flex;
    flex-direction: column;
    border-right: 1px solid #e0e1e3;
}

.tools {
    flex: 1;
    display: flex;
}

.caption {
    height: 17px;
    text-align: center;
    color: #555;
}

.clipboard { width: 263px; }
.organize { width: 165px; }
.new { width: 83px; }
.opening { width: 133px; }
.select { width: 115px; }

.big {
    flex-direction: column;
    justify-content: flex-start;
    gap: 2px;
    width: 42px;
    padding-top: 5px;
    line-height: 13px;
    white-space: normal;
}

.big > svg:first-child {
    width: 32px;
    height: 32px;
    margin-bottom: 2px;
}

.pin { width: 73px; margin-left: 2px; }
.new .big { width: 48px; }
.opening .big { width: 62px; }
button:disabled { color: #888; }

.big.pin svg { padding: 4px; }

.stack {
    display: flex;
    flex-direction: column;
    align-items: flex-start;
    padding: 3px 0 0 2px;
}

.stack button {
    gap: 4px;
    height: 22px;
}

.stack .caret { margin-left: 2px; }
.stack.two { padding: 6px 0 0 7px; }
.stack.two button { height: 29px; gap: 3px; }

.stack.two.divided {
    margin-left: 8px;
    border-left: 1px solid #e0e1e3;
}

.select .stack { padding-left: 7px; }

.address {
    display: flex;
    align-items: center;
    height: 35px;
    padding: 0 13px 0 5px;
    color: #555;
}

.address > button { width: 30px; }
.address > .off { color: #ccc; }
.address > .recent { width: 16px; }
.address > .up { width: 25px; }

.crumbs {
    flex: 1;
    display: flex;
    align-items: center;
    height: 22px;
    gap: 5px;
    padding-left: 3px;
    border: 1px solid #d9d9d9;
}

.crumbs span {
    flex: 1;
    padding-left: 3px;
    color: #111;
}

.crumbs .refresh {
    align-self: stretch;
    width: 17px;
    border-left: 1px solid #d9d9d9;
}

.find {
    display: flex;
    align-items: center;
    width: 202px;
    height: 22px;
    margin-left: 12px;
    padding: 0 8px;
    border: 1px solid #d9d9d9;
}

.body {
    flex: 1;
    display: flex;
    min-height: 0;
}

.tree {
    width: 139px;
    overflow: hidden;
}

.tree a {
    display: flex;
    align-items: center;
    gap: 5px;
    height: 24px;
    padding-left: 40px;
    white-space: nowrap;
}

.tree .top { padding-left: 32px; }
.tree .here { background: #d9d9d9; }

.vscroll {
    display: flex;
    flex-direction: column;
    width: 17px;
    background: #f0f0f0;
    color: #444;
}

.vscroll button { height: 18px; }

.vscroll .thumb {
    height: 102px;
    margin-top: auto;
    background: #cdcdcd;
}

.files {
    flex: 1;
    display: flex;
    flex-direction: column;
    justify-content: space-between;
    min-width: 0;
    padding-left: 4px;
}

table {
    width: 100%;
    padding-right: 9px;
    border-spacing: 0;
    border-collapse: separate;
    table-layout: fixed;
}

.gutter { width: 14px; }
.date { width: 144px; }
.type { width: 120px; }
.size { width: 77px; }
.edge { width: 4px; }

th {
    height: 25px;
    padding: 0 6px;
    border-right: 1px solid #e5e5e5;
    font-weight: 400;
    text-align: left;
    color: #43536e;
}

th.sorted {
    padding: 0 0 0 17px;
    background: #d9ebf9;
    border-right: 0;
}

.sorted div {
    display: flex;
    justify-content: space-between;
    height: 25px;
    align-items: center;
}

.sorted .mark {
    align-self: flex-start;
    margin-left: 78px;
    margin-right: auto;
}

.sorted button {
    align-self: stretch;
    width: 16px;
    border-left: 1px solid #bdd5e6;
}

tbody::before {
    content: "";
    display: table-row;
    height: 6px;
}

td {
    height: 21px;
    padding: 0 6px;
    color: #666;
    white-space: nowrap;
    border: 1px solid transparent;
    border-width: 1px 0;
}

td:nth-child(1), td:nth-child(6) { padding: 0; }

td:nth-child(2) {
    padding-left: 4px;
    color: #111;
}

td:nth-child(5) {
    padding-right: 4px;
    text-align: right;
}

td svg {
    display: inline-block;
    vertical-align: middle;
    margin-right: 4px;
}

td { line-height: 18px; }

.selected td:not(:first-child):not(:last-child) {
    background: #cce8ff;
    border-color: #99c9ec;
}

.selected td:nth-child(2) { border-left-width: 1px; padding-left: 3px; }
.selected td:nth-child(5) { border-right-width: 1px; }

.status {
    display: flex;
    align-items: center;
    gap: 22px;
    height: 24px;
    padding-left: 14px;
    color: #2c3f66;
}

.views {
    display: flex;
    align-self: stretch;
    margin-left: auto;
    padding-right: 5px;
}

.views button { width: 22px; }

.views .on {
    border: 1px solid #44b3dd;
    background: #cdeef9;
}

/* Watermark */
.watermark {
    position: absolute;
    right: 48px;
    bottom: 7px;
    display: flex;
    align-items: center;
    gap: 5px;
    font-family: "Liberation Sans Narrow", "Roboto Condensed", "Open Sans Condensed", Roboto, sans-serif;
    font-size: 34px;
    line-height: 62px;
    color: #b4bfd8b0;
}

.watermark svg {
    width: 54px;
    height: 62px;
}

/* Taskbar */
.taskbar {
    display: flex;
    height: 40px;
    background: #001522;
    color: #fff;
}

.start { width: 48px; }

.search {
    display: flex;
    align-items: center;
    gap: 11px;
    width: 288px;
    padding-left: 11px;
    background: #f2f2f2;
    border: 1px solid #ccc;
    color: #222;
    font-size: 15px;
}

.search input::placeholder { color: #333; }

.carnival {
    width: 70px;
    height: 38px;
    margin-right: 4px;
}

.app {
    width: 49px;
    border-bottom: 2px solid transparent;
}

.app svg:not(.i18) {
    width: 24px;
    height: 24px;
}

.running {
    border-image: linear-gradient(90deg, transparent 4px, #76b9ed 4px, #76b9ed 45px, transparent 45px) 2;
}

.focused {
    background: #344751;
    border-image: none;
    border-bottom-color: #76b9ed;
}

.tray {
    display: flex;
    margin-left: auto;
}

.tray button { width: 24px; }

.time {
    display: flex;
    flex-direction: column;
    justify-content: center;
    width: 64px;
    text-align: center;
    line-height: 18px;
}

.tray .notes { width: 40px; }

.tray .peek {
    width: 5px;
    border-left: 1px solid #555;
}
```
